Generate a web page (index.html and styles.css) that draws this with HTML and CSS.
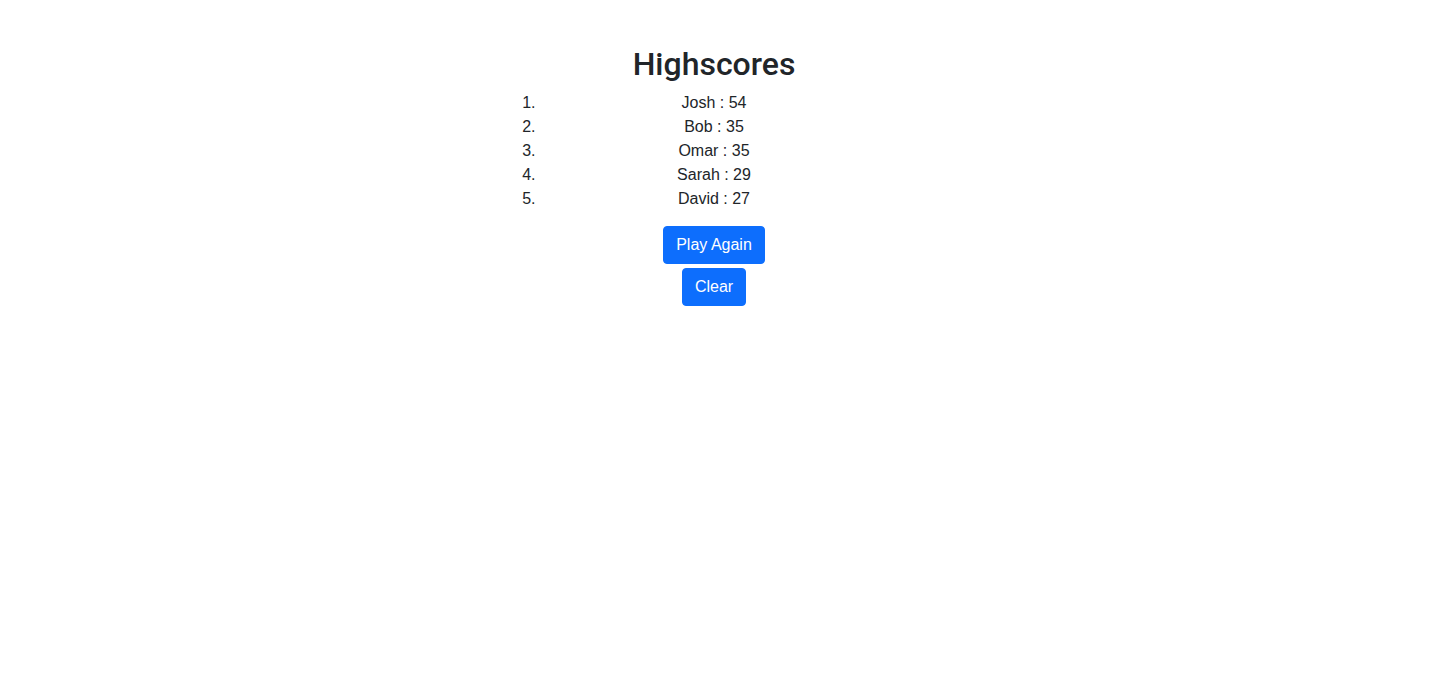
FILE: index.html
```html
<!DOCTYPE html>
<html lang="en">
<head>
<meta charset="utf-8">
<title>Highscores</title>
<link rel="stylesheet" href="styles.css">
</head>
<body>
<main class="page">
  <h2 class="title">Highscores</h2>
  <ol class="scores">
    <li>Josh : 54</li>
    <li>Bob : 35</li>
    <li>Omar : 35</li>
    <li>Sarah : 29</li>
    <li>David : 27</li>
  </ol>
  <div class="actions">
    <button class="btn">Play Again</button>
    <button class="btn">Clear</button>
  </div>
</main>
</body>
</html>
```

FILE: styles.css
```css
html, body {
  margin: 0;
  padding: 0;
  background: #fff;
}
body {
  font-family: "Liberation Sans", Arial, sans-serif;
  font-size: 16px;
  line-height: 24px;
  color: #212529;
}
.page {
  width: 1428px;
  padding-top: 45px;
  text-align: center;
}
.title {
  margin: 0 0 8px;
  font-family: Roboto, "Liberation Sans", Arial, sans-serif;
  font-size: 32px;
  font-weight: 500;
  line-height: 1.2;
}
.scores {
  width: 348px;
  margin: 0 0 15px calc(50% - 206px);
  padding-left: 32px;
  text-align: center;
}
.actions {
  display: flex;
  flex-direction: column;
  align-items: center;
  gap: 4px;
}
.btn {
  font-family: inherit;
  font-size: 16px;
  line-height: 24px;
  padding: 6px 12px;
  border: 1px solid #0d6efd;
  border-radius: 4px;
  background: #0d6efd;
  color: #fff;
  cursor: pointer;
}
```
